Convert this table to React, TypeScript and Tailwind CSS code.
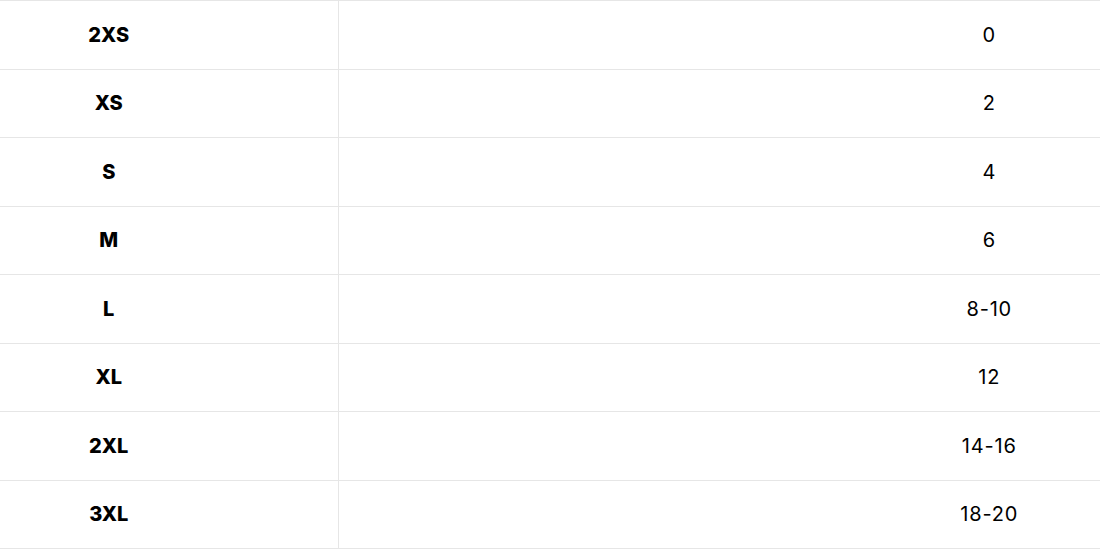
const sizes: [string, string][] = [
  ['2XS', '0'],
  ['XS', '2'],
  ['S', '4'],
  ['M', '6'],
  ['L', '8-10'],
  ['XL', '12'],
  ['2XL', '14-16'],
  ['3XL', '18-20'],
];

export default function App() {
  return (
    <div className="w-[1100px] h-[550px] overflow-hidden bg-white text-black font-['Inter',sans-serif]">
      <table className="w-full border-collapse">
        <tbody>
          {sizes.map(([size, value]) => (
            <tr key={size} className="h-[68.5px] border-y border-[#e6e6e6]">
              <td className="w-[338px] pr-[120px] text-center text-[20px] font-extrabold border-r border-[#e6e6e6]">
                {size}
              </td>
              <td className="pl-[540px] text-center text-[20px] tracking-[0.04em]">{value}</td>
            </tr>
          ))}
        </tbody>
      </table>
    </div>
  );
}
